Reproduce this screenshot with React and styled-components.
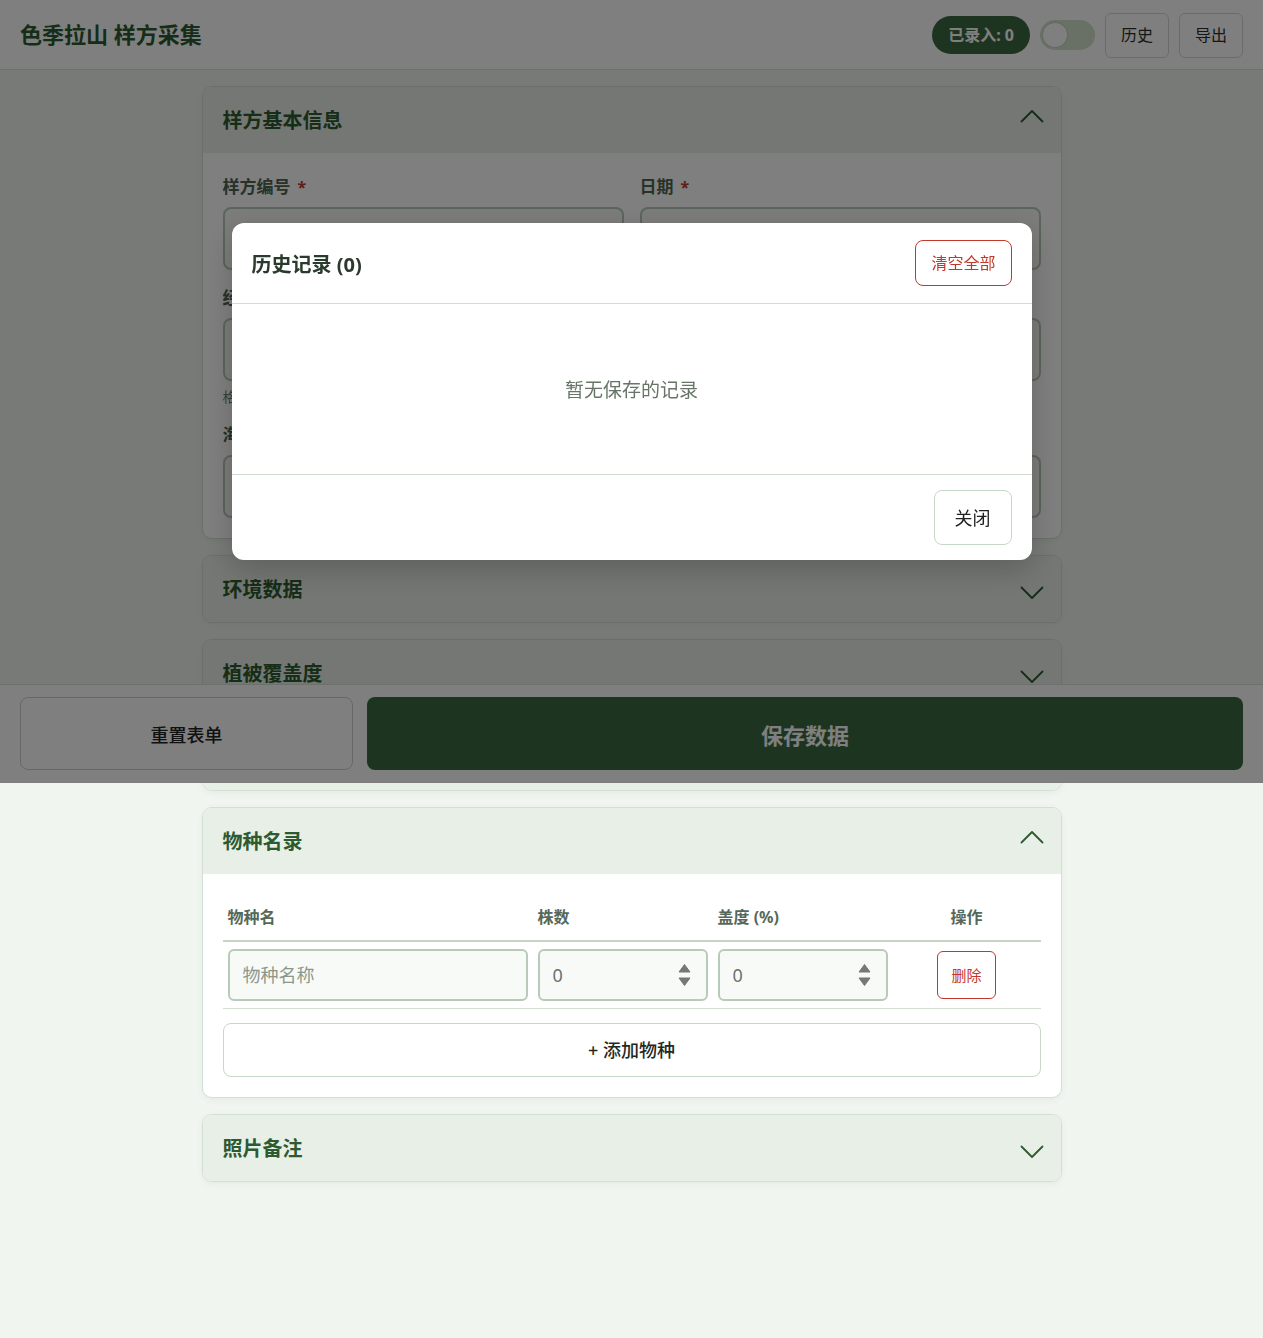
import React from "react";
import styled, { createGlobalStyle } from "styled-components";

const FONT = '"Noto Sans", "Noto Sans CJK SC", sans-serif';
const GREEN = "#2d5a30";
const GREEN_BTN = "#3b6b41";
const RED = "#c0392b";
const LINE = "#d3dfd2";

const Global = createGlobalStyle`
  * { box-sizing: border-box; }
  html, body { margin: 0; padding: 0; background: #f1f5f0; }
  body { font-family: ${FONT}; color: #1f2a1f; }
  button, input { font-family: ${FONT}; }
`;

/* ---------- top bar ---------- */
const TopBar = styled.header`
  height: 70px;
  background: #fff;
  border-bottom: 1px solid #dbe3da;
  display: flex;
  align-items: center;
  justify-content: space-between;
  padding: 0 20px;
`;
const AppTitle = styled.h1`
  margin: 0 0 1px;
  font-size: 22px;
  line-height: 30px;
  font-weight: 700;
  color: ${GREEN};
`;
const TopActions = styled.div`
  display: flex;
  align-items: center;
  gap: 10px;
  margin-top: 1px;
`;
const CountBadge = styled.span`
  background: ${GREEN_BTN};
  color: #fff;
  font-size: 16px;
  font-weight: 700;
  line-height: 24px;
  padding: 7px 16px;
  border-radius: 19px;
`;
const Toggle = styled.span`
  width: 55px;
  height: 30px;
  border-radius: 15px;
  background: #d3e1cd;
  display: flex;
  align-items: center;
  padding: 3px;
`;
const ToggleKnob = styled.span`
  width: 24px;
  height: 24px;
  border-radius: 50%;
  background: #fff;
  box-shadow: 0 0 0 1px #c4d2c0;
`;
const GhostButton = styled.button`
  background: #fff;
  border: 1px solid #d3dbd2;
  border-radius: 6px;
  font-size: 16px;
  line-height: 23px;
  padding: 10px 15px;
  color: #2a2f2a;
`;

/* ---------- sections ---------- */
const Main = styled.main`
  max-width: 860px;
  margin: 0 auto;
  padding: 16px 0 120px;
  display: flex;
  flex-direction: column;
  gap: 16px;
`;
const Card = styled.section`
  background: #fff;
  border: 1px solid ${LINE};
  border-radius: 10px;
  overflow: hidden;
  box-shadow: 0 2px 6px rgba(45, 90, 48, 0.06);
`;
const CardHeader = styled.div`
  background: #e8efe6;
  padding: 21px 17px 19px 20px;
  display: flex;
  align-items: center;
  justify-content: space-between;
`;
const CardTitle = styled.h2`
  margin: 0;
  font-size: 20px;
  line-height: 26px;
  font-weight: 700;
  color: ${GREEN};
`;
const CardBody = styled.div`
  padding: ${(p) => p.$pad || "22px 20px 20px"};
`;
const ChevronIcon = styled.svg`
  flex: none;
  margin-top: ${(p) => (p.$up ? "-10px" : "6px")};
`;

const Chevron = ({ up }) => (
  <ChevronIcon $up={up} width="24" height="14" viewBox="0 0 24 14" fill="none">
    <polyline
      points={up ? "1.5,12.5 12,2 22.5,12.5" : "1.5,1.5 12,12 22.5,1.5"}
      stroke={GREEN}
      strokeWidth="1.8"
      strokeLinecap="round"
      strokeLinejoin="round"
    />
  </ChevronIcon>
);

const Section = ({ title, open, children, pad }) => (
  <Card>
    <CardHeader>
      <CardTitle>{title}</CardTitle>
      <Chevron up={open} />
    </CardHeader>
    {open && <CardBody $pad={pad}>{children}</CardBody>}
  </Card>
);

/* ---------- basic info form ---------- */
const FieldGrid = styled.div`
  display: grid;
  grid-template-columns: 1fr 1fr;
  gap: 16px;
`;
const Field = styled.div`
  display: flex;
  flex-direction: column;
`;
const Label = styled.label`
  font-size: 17px;
  line-height: 24px;
  font-weight: 700;
  color: #50644f;
  margin-bottom: 8px;
`;
const Required = styled.span`
  color: ${RED};
  margin-left: 7px;
  font-size: 16px;
`;
const TextInput = styled.input`
  height: 63px;
  border: 2px solid #b8cab8;
  border-radius: 8px;
  background: #f8faf7;
  font-size: 18px;
  padding: 0 14px;
  color: #333;
  outline: none;
`;
const Hint = styled.small`
  margin-top: 6px;
  font-size: 14px;
  line-height: 20px;
  color: #6d7d6d;
`;

/* ---------- species table ---------- */
const Table = styled.table`
  width: 100%;
  table-layout: fixed;
  border-collapse: collapse;
`;
const Th = styled.th`
  text-align: ${(p) => (p.$center ? "center" : "left")};
  font-size: 16px;
  line-height: 22px;
  font-weight: 700;
  color: #55685a;
  padding: 12px 5px;
  border-bottom: 2px solid #c5d6c4;
`;
const Td = styled.td`
  padding: 7px 5px;
  border-bottom: 1px solid #d3dfd2;
  text-align: ${(p) => (p.$center ? "center" : "left")};
`;
const CellInput = styled.input`
  display: block;
  width: 100%;
  height: 52px;
  border: 2px solid #b8cab8;
  border-radius: 6px;
  background: #f8faf7;
  font-size: 18px;
  padding: 0 13px;
  color: #555;
  outline: none;
  &::placeholder { color: #8a978a; }
`;
const NumberBox = styled.div`
  height: 52px;
  border: 2px solid #b8cab8;
  border-radius: 6px;
  background: #f8faf7;
  display: flex;
  align-items: center;
  padding: 0 15px 0 13px;
`;
const NumberValue = styled.input`
  flex: 1;
  min-width: 0;
  border: none;
  background: transparent;
  font-size: 18px;
  color: #707070;
  padding: 0;
  outline: none;
`;
const Spinner = () => (
  <svg width="13" height="24" viewBox="0 0 13 24">
    <path d="M6.5 1.5 L12 9 H1 Z" fill="#777" strokeLinejoin="round" stroke="#777" strokeWidth="1" />
    <path d="M6.5 22.5 L12 15 H1 Z" fill="#777" strokeLinejoin="round" stroke="#777" strokeWidth="1" />
  </svg>
);
const DangerButton = styled.button`
  background: #fff;
  border: 1px solid ${RED};
  color: ${RED};
  white-space: nowrap;
  border-radius: ${(p) => (p.$large ? "8px" : "6px")};
  font-size: ${(p) => (p.$large ? "16px" : "15px")};
  line-height: ${(p) => (p.$large ? "24px" : "22px")};
  padding: ${(p) => (p.$large ? "10px 15px" : "12px 13px")};
`;
const AddButton = styled.button`
  display: block;
  width: 100%;
  margin-top: 14px;
  background: #fff;
  border: 1px solid #c8d8c7;
  border-radius: 8px;
  font-size: 18px;
  font-weight: 500;
  line-height: 24px;
  padding: 14px;
  color: #1f2a1f;
`;

/* ---------- fixed layers: action bar and dialog ---------- */
const Screen = styled.div`
  position: fixed;
  top: 0;
  left: 0;
  right: 0;
  height: 783px;
  pointer-events: none;
`;
const ActionBar = styled.div`
  position: absolute;
  left: 0;
  right: 0;
  bottom: 0;
  height: 99px;
  background: #fff;
  border-top: 1px solid #dbe3da;
  display: grid;
  grid-template-columns: 333fr 876fr;
  gap: 14px;
  padding: 12px 20px 13px;
`;
const ResetButton = styled.button`
  background: #fff;
  border: 1px solid #c9d3c8;
  border-radius: 8px;
  font-size: 18px;
  font-weight: 500;
  color: #222;
`;
const SaveButton = styled.button`
  background: ${GREEN_BTN};
  border: none;
  border-radius: 8px;
  font-size: 22px;
  font-weight: 700;
  color: #fff;
`;
const Backdrop = styled.div`
  position: absolute;
  inset: 0;
  background: rgba(0, 0, 0, 0.5);
  display: flex;
  align-items: center;
  justify-content: center;
`;
const Dialog = styled.div`
  width: 800px;
  background: #fff;
  border-radius: 12px;
  overflow: hidden;
  box-shadow: 0 10px 30px rgba(0, 0, 0, 0.2);
`;
const DialogHeader = styled.div`
  display: flex;
  align-items: center;
  justify-content: space-between;
  padding: 17px 20px 17px;
  border-bottom: 1px solid #cfdccf;
`;
const DialogTitle = styled.h3`
  margin: 0;
  font-size: 20px;
  font-weight: 700;
  color: #2a3a2c;
`;
const EmptyText = styled.p`
  margin: 0;
  padding: 71px 20px 69px;
  line-height: 30px;
  text-align: center;
  font-size: 19px;
  color: #667566;
`;
const DialogFooter = styled.div`
  display: flex;
  justify-content: flex-end;
  padding: 15px 20px;
  border-top: 1px solid #cfdccf;
`;
const CloseButton = styled.button`
  background: #fff;
  border: 1px solid #c5d8c5;
  border-radius: 8px;
  font-size: 18px;
  line-height: 27px;
  padding: 14px 20px 12px;
  color: #222;
`;

export default function App() {
  return (
    <>
      <Global />
      <TopBar>
        <AppTitle>色季拉山 样方采集</AppTitle>
        <TopActions>
          <CountBadge>已录入: 0</CountBadge>
          <Toggle>
            <ToggleKnob />
          </Toggle>
          <GhostButton>历史</GhostButton>
          <GhostButton>导出</GhostButton>
        </TopActions>
      </TopBar>

      <Main>
        <Section title="样方基本信息" open>
          <FieldGrid>
            <Field>
              <Label>
                样方编号<Required>*</Required>
              </Label>
              <TextInput />
            </Field>
            <Field>
              <Label>
                日期<Required>*</Required>
              </Label>
              <TextInput />
            </Field>
            <Field>
              <Label>经度</Label>
              <TextInput />
              <Hint>格式：十进制度</Hint>
            </Field>
            <Field>
              <Label>纬度</Label>
              <TextInput />
            </Field>
            <Field>
              <Label>海拔 (m)</Label>
              <TextInput />
            </Field>
            <Field>
              <Label>坡向</Label>
              <TextInput />
            </Field>
          </FieldGrid>
        </Section>

        <Section title="环境数据" />
        <Section title="植被覆盖度" />
        <Section title="土壤信息" />

        <Section title="物种名录" open pad="20px 20px 20px">
          <Table>
            <colgroup>
              <col style={{ width: 310 }} />
              <col style={{ width: 180 }} />
              <col style={{ width: 180 }} />
              <col />
            </colgroup>
            <thead>
              <tr>
                <Th>物种名</Th>
                <Th>株数</Th>
                <Th>盖度 (%)</Th>
                <Th $center>操作</Th>
              </tr>
            </thead>
            <tbody>
              <tr>
                <Td>
                  <CellInput placeholder="物种名称" />
                </Td>
                <Td>
                  <NumberBox>
                    <NumberValue defaultValue="0" />
                    <Spinner />
                  </NumberBox>
                </Td>
                <Td>
                  <NumberBox>
                    <NumberValue defaultValue="0" />
                    <Spinner />
                  </NumberBox>
                </Td>
                <Td $center>
                  <DangerButton>删除</DangerButton>
                </Td>
              </tr>
            </tbody>
          </Table>
          <AddButton>+ 添加物种</AddButton>
        </Section>

        <Section title="照片备注" />
      </Main>

      <Screen>
        <ActionBar>
          <ResetButton>重置表单</ResetButton>
          <SaveButton>保存数据</SaveButton>
        </ActionBar>
        <Backdrop>
          <Dialog>
            <DialogHeader>
              <DialogTitle>历史记录 (0)</DialogTitle>
              <DangerButton $large>清空全部</DangerButton>
            </DialogHeader>
            <EmptyText>暂无保存的记录</EmptyText>
            <DialogFooter>
              <CloseButton>关闭</CloseButton>
            </DialogFooter>
          </Dialog>
        </Backdrop>
      </Screen>
    </>
  );
}
